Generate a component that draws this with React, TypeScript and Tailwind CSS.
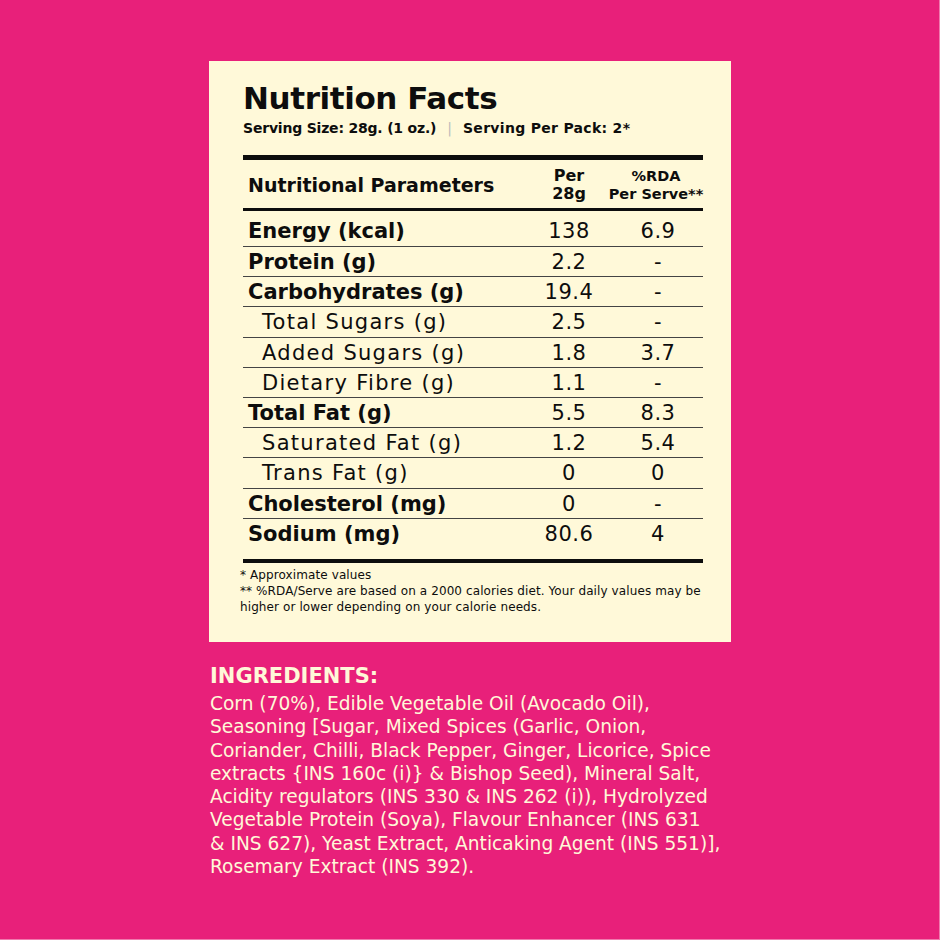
const rows: { label: string; per: string; rda: string; bold: boolean }[] = [
  { label: "Energy (kcal)", per: "138", rda: "6.9", bold: true },
  { label: "Protein (g)", per: "2.2", rda: "-", bold: true },
  { label: "Carbohydrates (g)", per: "19.4", rda: "-", bold: true },
  { label: "Total Sugars (g)", per: "2.5", rda: "-", bold: false },
  { label: "Added Sugars (g)", per: "1.8", rda: "3.7", bold: false },
  { label: "Dietary Fibre (g)", per: "1.1", rda: "-", bold: false },
  { label: "Total Fat (g)", per: "5.5", rda: "8.3", bold: true },
  { label: "Saturated Fat (g)", per: "1.2", rda: "5.4", bold: false },
  { label: "Trans Fat (g)", per: "0", rda: "0", bold: false },
  { label: "Cholesterol (mg)", per: "0", rda: "-", bold: true },
  { label: "Sodium (mg)", per: "80.6", rda: "4", bold: true },
];

const ingredients = [
  "Corn (70%), Edible Vegetable Oil (Avocado Oil),",
  "Seasoning [Sugar, Mixed Spices (Garlic, Onion,",
  "Coriander, Chilli, Black Pepper, Ginger, Licorice, Spice",
  "extracts {INS 160c (i)} & Bishop Seed), Mineral Salt,",
  "Acidity regulators (INS 330 & INS 262 (i)), Hydrolyzed",
  "Vegetable Protein (Soya), Flavour Enhancer (INS 631",
  "& INS 627), Yeast Extract, Anticaking Agent (INS 551)],",
  "Rosemary Extract (INS 392).",
];

export default function App() {
  return (
    <div className="w-[940px] h-[940px] bg-[#e8207a] border-r border-b border-[#f07aae] pt-[61px] font-['DejaVu_Sans',sans-serif] text-[#0d0d0d]">
      {/* Nutrition card */}
      <div className="ml-[209px] w-[522px] h-[581px] bg-[#fff9d9] pl-[34px] pr-[28px] pt-[17px]">
        <h1 className="text-[31px] font-bold leading-[40px] tracking-[-0.4px]">Nutrition Facts</h1>
        <p className="text-[14px] font-bold leading-[20px] flex items-center">
          <span className="tracking-[-0.2px]">Serving Size: 28g. (1 oz.)</span>
          <span className="mx-[11px] text-[#bbb] font-normal">|</span>
          <span className="tracking-[0.3px]">Serving Per Pack: 2*</span>
        </p>

        <div className="mt-[17px] h-[5px] bg-[#0d0d0d]" />
        <div className="grid grid-cols-[282px_88px_90px] items-center h-[51px] pt-[2px] border-b-[3px] border-[#0d0d0d]">
          <div className="pl-[5px] text-[19px] font-bold">Nutritional Parameters</div>
          <div className="flex flex-col items-center text-[16px] font-bold leading-[18px]">
            <span>Per</span>
            <span>28g</span>
          </div>
          <div className="flex flex-col items-center whitespace-nowrap text-[14.5px] font-bold leading-[18px] pr-[4px]">
            <span>%RDA</span>
            <span>Per Serve**</span>
          </div>
        </div>

        {rows.map((r, i) => {
          const first = i === 0;
          const last = i === rows.length - 1;
          return (
            <div
              key={r.label}
              className={`grid grid-cols-[282px_88px_90px] items-center text-[21px] ${
                first ? "h-[36px] pt-[5px]" : "h-[30.2px]"
              } ${last ? "h-[40px] pb-[7px]" : "border-b border-[#444]"}`}
            >
              <div className={r.bold ? "pl-[5px] font-bold" : "pl-[19px] font-normal tracking-[1.3px]"}>
                {r.label}
              </div>
              <div className="text-center font-normal tracking-[0.5px]">{r.per}</div>
              <div className="text-center font-normal tracking-[0.5px]">{r.rda}</div>
            </div>
          );
        })}
        <div className="h-[4px] bg-[#0d0d0d]" />

        <div className="mt-[5px] -ml-[3px] text-[12px] leading-[15.5px] font-normal tracking-[0.1px]">
          <p>* Approximate values</p>
          <p className="mt-[1px]">
            ** %RDA/Serve are based on a 2000 calories diet. Your daily values may be
            <br />
            higher or lower depending on your calorie needs.
          </p>
        </div>
      </div>

      {/* Ingredients */}
      <div className="ml-[210px] mt-[20px] text-[#fff8d8]">
        <h2 className="text-[21px] font-bold leading-[28px]">INGREDIENTS:</h2>
        <p className="pt-[2px] text-[18.6px] leading-[23.3px] font-normal whitespace-nowrap">
          {ingredients.map((line) => (
            <span key={line} className="block">
              {line}
            </span>
          ))}
        </p>
      </div>
    </div>
  );
}
